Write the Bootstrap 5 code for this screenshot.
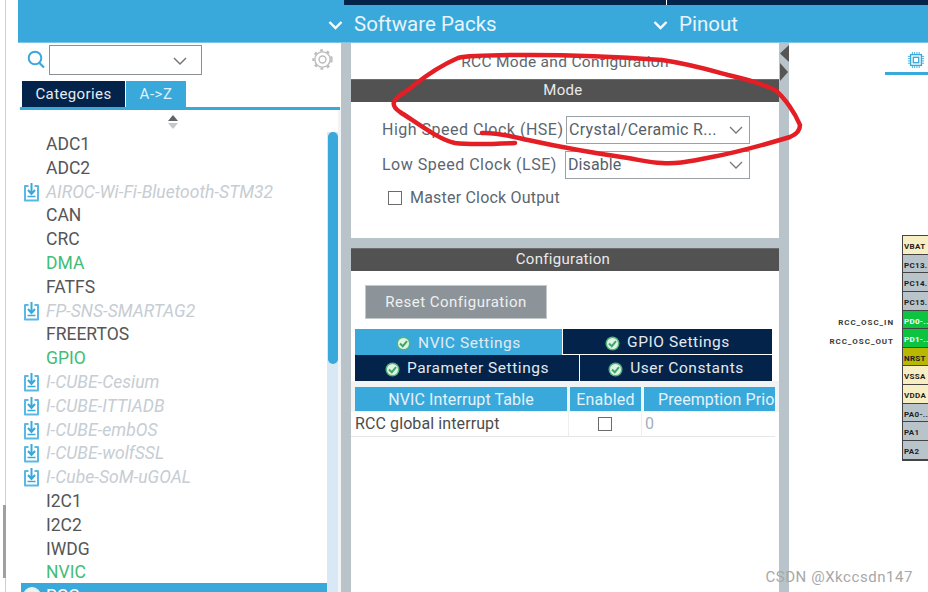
<!DOCTYPE html>
<html lang="en">
<head>
<meta charset="utf-8">
<link href="https://cdn.jsdelivr.net/npm/bootstrap@5.3.0/dist/css/bootstrap.min.css" rel="stylesheet">
<style>
html,body{margin:0;height:100%;overflow:hidden;background:#fff;font-family:Roboto,"Liberation Sans",sans-serif;}
.app-frame{width:928px;height:592px;position:relative;overflow:hidden;padding-left:19px;}
.edge-line{position:absolute;left:5px;top:0;width:1px;height:592px;background:#cfcfcf;}
.edge-line::after{content:"";position:absolute;left:-2px;top:505px;height:73px;width:3px;background:#a0a0a0;}
.top-strip{height:5px;margin-left:-1px;}
.strip-a{width:326px;background:#39a9dc;}
.strip-b{width:322px;margin-right:1px;background:#03234b;}
.strip-c{flex:1;background:#03234b;}
.head-bar{height:38px;margin-left:-1px;padding-left:310px;padding-top:2px;background:#39a9dc;color:#e8f4fb;font-size:20.5px;border-bottom:1px solid #7cc5e8;}
.head-mid{width:325px;}
.chev{width:15px;height:10px;margin-right:11px;}
.workarea{height:549px;}
.left-col{width:322px;background:#f3f4f5;}
.tool-row{height:38px;padding:2px 0 0 8px;background:#fff;}
.find-box{width:153px;height:30px;border:1px solid #8c9196;margin-left:2px;position:relative;}
.find-box svg{position:absolute;right:14px;top:11px;}
.tab-row{height:26px;padding-left:3px;gap:1px;background:#fff;}
.tab-cat{width:103px;padding-top:1px;background:#03234b;color:#e6ecf2;font-size:15px;letter-spacing:.4px;}
.tab-az{width:60px;padding-top:1px;background:#39a9dc;color:#dff1fa;font-size:15px;letter-spacing:.5px;}
.tab-line{height:3px;background:#39a9dc;margin:0 1px;}
.list-wrap{height:482px;position:relative;background:#fff;margin-right:3px;}
.sort-mark{height:18px;padding-left:148px;padding-top:5px;}
.peri-list{padding:0;margin:3px 0 0 2px;list-style:none;font-size:17.5px;width:306px;}
.peri-item{height:23.8px;line-height:27.4px;padding-left:25px;color:#565656;position:relative;white-space:nowrap;}
.peri-green{color:#41bd78;}
.peri-pack{color:#c6cdd3;font-style:italic;}
.peri-pack svg{position:absolute;left:2px;top:3px;}
.peri-sel{background:#39a9dc;color:#fff;}
.peri-sel svg{position:absolute;left:1px;top:3px;}
.scroll-track{position:absolute;right:0;top:22px;bottom:0;width:11px;background:#d9e8f5;}
.scroll-thumb{position:absolute;right:0;top:0;width:10px;height:232px;background:#39a9dc;border-radius:5px;}
.center-gap{width:10px;background:#b9c4ca;}
.center-col{width:428px;background:#b9c4ca;}
.mode-panel{height:195px;background:#fff;font-size:16px;color:#5c6670;}
.panel-title{height:36px;padding-top:8px;text-align:center;font-size:15.5px;letter-spacing:.3px;color:#5e6770;}
.dark-head{height:23px;background:#525252;color:#eaeaea;font-size:15px;letter-spacing:.3px;line-height:21px;text-align:center;border-top:1px solid #6d6d6d;padding-right:4px;}
.pad-form{height:10px;}
.form-line{height:35px;padding-left:31px;letter-spacing:.5px;}
.form-line label{width:184px;white-space:nowrap;}
.combo{width:184px;height:28px;border:1px solid #9aa1a6;padding:0 2px;position:relative;line-height:26px;color:#55606a;letter-spacing:.3px;}
.combo svg{position:absolute;right:6px;top:9px;}
.combo-wide{width:185px;margin-left:-1px;letter-spacing:.1px;}
.check-line{padding-left:37px;height:32px;letter-spacing:.2px;}
.box-check{width:14px;height:14px;border:1px solid #6b6b6b;background:#fff;margin-right:8px;}
.config-panel{margin-top:10px;height:344px;background:#fff;}
.reset-wrap{padding:14px 0 0 14px;height:58px;}
.reset-btn{width:182px;height:34px;background:#8d9499;color:#eef0f1;font-size:15px;letter-spacing:.5px;line-height:32px;text-align:center;border:1px solid #c3c8cb;}
.tab-grid{padding-left:4px;width:421px;}
.tab-line-a,.tab-line-b{height:26px;gap:1px;color:#e3eaf0;font-size:15.5px;letter-spacing:.55px;}
.tab-cell{background:#03234b;}
.tab-line-a .tab-cell{height:25px;padding-top:3px;}
.tab-line-b .tab-cell{padding-top:2px;}
.tab-cell svg{margin-right:7px;}
.tab-line-a .tab-on{background:#39a9dc;height:26px;width:207px;}
.w-224{width:224px;}
.w-fill{flex:1;}
.table-head{gap:3px;background:#f2f3f4;padding:6px 4px 0 4px;height:31px;}
.th-cell{height:24px;background:#39a9dc;color:#e4f2fa;font-size:16px;letter-spacing:.1px;line-height:26px;text-align:center;white-space:nowrap;overflow:hidden;}
.th-a{width:212px;}
.th-b{width:71px;letter-spacing:.2px;}
.th-c{flex:1;text-align:left;padding-left:14px;}
.table-row{height:25px;margin-right:4px;padding-left:4px;font-size:16px;color:#4c4c4c;border-bottom:1px solid #e4e6e8;background:#fff;}
.td-a{width:213px;line-height:24px;letter-spacing:.1px;}
.td-b{width:74px;border-left:1px solid #eee;border-right:1px solid #eee;height:24px;}
.td-c{padding-left:3px;color:#9fb0bf;line-height:24px;}
.col-splitter{width:10px;background:#b9c4ca;position:relative;}
.col-splitter svg{position:absolute;top:2px;left:0;}
.right-pane{flex:1;background:#fff;position:relative;}
.chip-tab{position:absolute;left:96px;top:0;width:62px;height:32px;}
.chip-line{position:absolute;left:0;top:29px;right:0;height:3px;background:#39a9dc;}
.pin-stack{position:absolute;left:113px;top:192px;width:26px;border:1px solid #444;border-right:0;font-size:8px;font-weight:700;}
.pin-cell{height:18.65px;line-height:22px;border-bottom:1px solid #444;background:#b9c4ca;color:#1e1e1e;white-space:nowrap;overflow:hidden;letter-spacing:.3px;padding-left:1px;}
.pin-cream{background:#f8eec4;}
.pin-green{background:#0cc440;color:#fff;}
.pin-olive{background:#b8b800;}
.pin-note{position:absolute;font-size:8px;font-weight:700;color:#3a3a3a;letter-spacing:.95px;right:34px;white-space:nowrap;}
.note-in{top:274px;}
.note-out{top:293px;}
.watermark{position:absolute;right:15px;bottom:4px;font-size:15px;color:#a8a8a8;letter-spacing:.55px;}
.ink-overlay{position:absolute;left:0;top:0;pointer-events:none;}
</style>
</head>
<body>
<div class="app-frame">
  <div class="edge-line"></div>
  <div class="top-strip d-flex">
    <div class="strip-a"></div><div class="strip-b"></div><div class="strip-c"></div>
  </div>
  <div class="head-bar d-flex align-items-center">
    <div class="head-mid d-flex align-items-center"><svg class="chev" viewBox="0 0 15 10"><path d="M1.500 2 7.500 8 13.500 2" fill="none" stroke="#fff" stroke-width="2.400"/></svg>Software Packs</div>
    <div class="d-flex align-items-center"><svg class="chev" viewBox="0 0 15 10"><path d="M1.500 2 7.500 8 13.500 2" fill="none" stroke="#fff" stroke-width="2.400"/></svg>Pinout</div>
  </div>
  <div class="workarea d-flex">
    <div class="left-col">
      <div class="tool-row d-flex align-items-start">
        <svg width="20" height="22" viewBox="0 0 20 22" class="mt-1"><circle cx="8" cy="9" r="6.300" fill="none" stroke="#39a9dc" stroke-width="2"/><path d="M12.500 14 17 18.500" stroke="#39a9dc" stroke-width="2.200"/></svg>
        <div class="find-box"><svg width="14" height="9" viewBox="0 0 14 9"><path d="M1 1 7 7 13 1" fill="none" stroke="#777" stroke-width="1.500"/></svg></div>
        <svg width="21" height="21" viewBox="0 0 22 22" class="ms-auto mt-1" style="margin-right:8px"><circle cx="11" cy="11" r="3.600" fill="none" stroke="#bdbdbd" stroke-width="1.500"/><circle cx="11" cy="11" r="8" fill="none" stroke="#bdbdbd" stroke-width="1.500"/><circle cx="11" cy="11" r="9.500" fill="none" stroke="#bdbdbd" stroke-width="2.400" stroke-dasharray="3 4"/></svg>
      </div>
      <div class="tab-row d-flex">
        <div class="tab-cat d-flex align-items-center justify-content-center">Categories</div>
        <div class="tab-az d-flex align-items-center justify-content-center">A-&gt;Z</div>
      </div>
      <div class="tab-line"></div>
      <div class="list-wrap">
        <div class="sort-mark"><svg width="12" height="14" viewBox="0 0 12 14" class="d-block"><path d="M6 0 11 6H1Z" fill="#5f6468"/><path d="M6 14 11 8H1Z" fill="#c4c8cb"/></svg></div>
        <ul class="peri-list">
          <li class="peri-item">ADC1</li>
          <li class="peri-item">ADC2</li>
          <li class="peri-item peri-pack"><svg width="17" height="20" viewBox="0 0 16 20"><use href="#pk"/></svg>AIROC-Wi-Fi-Bluetooth-STM32</li>
          <li class="peri-item">CAN</li>
          <li class="peri-item">CRC</li>
          <li class="peri-item peri-green">DMA</li>
          <li class="peri-item">FATFS</li>
          <li class="peri-item peri-pack"><svg width="17" height="20" viewBox="0 0 16 20"><use href="#pk"/></svg>FP-SNS-SMARTAG2</li>
          <li class="peri-item">FREERTOS</li>
          <li class="peri-item peri-green">GPIO</li>
          <li class="peri-item peri-pack"><svg width="17" height="20" viewBox="0 0 16 20"><use href="#pk"/></svg>I-CUBE-Cesium</li>
          <li class="peri-item peri-pack"><svg width="17" height="20" viewBox="0 0 16 20"><use href="#pk"/></svg>I-CUBE-ITTIADB</li>
          <li class="peri-item peri-pack"><svg width="17" height="20" viewBox="0 0 16 20"><use href="#pk"/></svg>I-CUBE-embOS</li>
          <li class="peri-item peri-pack"><svg width="17" height="20" viewBox="0 0 16 20"><use href="#pk"/></svg>I-CUBE-wolfSSL</li>
          <li class="peri-item peri-pack"><svg width="17" height="20" viewBox="0 0 16 20"><use href="#pk"/></svg>I-Cube-SoM-uGOAL</li>
          <li class="peri-item">I2C1</li>
          <li class="peri-item">I2C2</li>
          <li class="peri-item">IWDG</li>
          <li class="peri-item peri-green">NVIC</li>
          <li class="peri-item peri-sel"><svg width="20" height="20" viewBox="0 0 20 20"><circle cx="10" cy="10" r="9" fill="#e8f5ec"/><path d="M5 10l4 4 6-7" fill="none" stroke="#35a85d" stroke-width="2.400"/></svg>RCC</li>
        </ul>
        <div class="scroll-track"><div class="scroll-thumb"></div></div>
      </div>
    </div>
    <div class="center-gap"></div>
    <div class="center-col">
      <div class="mode-panel">
        <div class="panel-title">RCC Mode and Configuration</div>
        <div class="dark-head">Mode</div>
        <div class="pad-form"></div>
        <div class="form-line d-flex align-items-center"><label>High Speed Clock (HSE)</label><div class="combo">Crystal/Ceramic R...<svg width="14" height="9" viewBox="0 0 14 9"><path d="M1 1 7 7 13 1" fill="none" stroke="#777" stroke-width="1.300"/></svg></div></div>
        <div class="form-line d-flex align-items-center"><label>Low Speed Clock (LSE)</label><div class="combo combo-wide">Disable<svg width="14" height="9" viewBox="0 0 14 9"><path d="M1 1 7 7 13 1" fill="none" stroke="#777" stroke-width="1.300"/></svg></div></div>
        <div class="check-line d-flex align-items-center"><span class="box-check"></span>Master Clock Output</div>
      </div>
      <div class="config-panel">
        <div class="dark-head">Configuration</div>
        <div class="reset-wrap"><div class="reset-btn">Reset Configuration</div></div>
        <div class="tab-grid">
          <div class="tab-line-a d-flex">
            <div class="tab-cell tab-on d-flex align-items-center justify-content-center"><svg width="15" height="15" viewBox="0 0 15 15"><use href="#ok"/></svg>NVIC Settings</div>
            <div class="tab-cell w-fill d-flex align-items-center justify-content-center"><svg width="15" height="15" viewBox="0 0 15 15"><use href="#ok"/></svg>GPIO Settings</div>
          </div>
          <div class="tab-line-b d-flex">
            <div class="tab-cell w-224 d-flex align-items-center justify-content-center"><svg width="15" height="15" viewBox="0 0 15 15"><use href="#ok"/></svg>Parameter Settings</div>
            <div class="tab-cell w-fill d-flex align-items-center justify-content-center"><svg width="15" height="15" viewBox="0 0 15 15"><use href="#ok"/></svg>User Constants</div>
          </div>
        </div>
        <div class="table-head d-flex">
          <div class="th-cell th-a">NVIC Interrupt Table</div>
          <div class="th-cell th-b">Enabled</div>
          <div class="th-cell th-c">Preemption Prio</div>
        </div>
        <div class="table-row d-flex">
          <div class="td-a">RCC global interrupt</div>
          <div class="td-b d-flex align-items-center justify-content-center"><span class="box-check m-0"></span></div>
          <div class="td-c">0</div>
        </div>
      </div>
    </div>
    <div class="col-splitter"><svg width="10" height="40" viewBox="0 0 10 40"><path d="M10 0V17L1 8.500Z" fill="#555"/><path d="M1 18V36L9 27Z" fill="#555"/></svg></div>
    <div class="right-pane">
      <div class="chip-tab d-flex justify-content-center">
        <svg style="margin-top:8px" width="18" height="18" viewBox="0 0 20 20"><rect x="4" y="4" width="12" height="12" fill="none" stroke="#39a9dc" stroke-width="1.500"/><rect x="7" y="7" width="6" height="6" fill="none" stroke="#39a9dc" stroke-width="1.500"/><path d="M1 6h3M1 8.500h3M1 11h3M1 13.500h3M16 6h3M16 8.500h3M16 11h3M16 13.500h3M6 1v3M8.500 1v3M11 1v3M13.500 1v3M6 16v3M8.500 16v3M11 16v3M13.500 16v3" stroke="#39a9dc" stroke-width="1"/></svg>
        <div class="chip-line"></div>
      </div>
      <div class="pin-note note-in">RCC_OSC_IN</div>
      <div class="pin-note note-out">RCC_OSC_OUT</div>
      <div class="pin-stack">
        <div class="pin-cell pin-cream">VBAT</div>
        <div class="pin-cell">PC13.</div>
        <div class="pin-cell">PC14.</div>
        <div class="pin-cell">PC15.</div>
        <div class="pin-cell pin-green">PD0-..</div>
        <div class="pin-cell pin-green">PD1-..</div>
        <div class="pin-cell pin-olive">NRST</div>
        <div class="pin-cell pin-cream">VSSA</div>
        <div class="pin-cell pin-cream">VDDA</div>
        <div class="pin-cell">PA0-..</div>
        <div class="pin-cell">PA1</div>
        <div class="pin-cell">PA2</div>
      </div>
    </div>
  </div>
  <div class="watermark">CSDN @Xkccsdn147</div>
  <svg class="ink-overlay" width="928" height="592" viewBox="0 0 928 592"><path d="M515 143C495 144 470 145 455 143C440 140 420 125 400 112C390 105 392 100 405 92C415 85 430 70 458 58C470 55 500 55 530 55C580 55 620 57 662 60C690 64 710 70 728 75C750 80 765 85 775 90C785 98 795 113 800 125C800 132 795 135 790 137C770 143 740 152 712 157C690 161 680 164 662 163C650 163 640 160 628 158C600 154 560 147 528 140C510 136 495 132 482 133" fill="none" stroke="#e31e24" stroke-width="4.500" stroke-linecap="round" stroke-linejoin="round"/></svg>
</div>
<svg width="0" height="0" class="position-absolute">
  <defs>
    <g id="pk"><path d="M5 4H1.500V18.500H14.500V4H11" fill="none" stroke="#5bb8e4" stroke-width="2" stroke-linejoin="round"/><path d="M8 1V11M4.500 8 8 12 11.500 8" fill="none" stroke="#39a9dc" stroke-width="2"/><path d="M4 14.500H12" stroke="#39a9dc" stroke-width="1.500"/></g>
    <g id="ok"><circle cx="7.500" cy="7.500" r="7" fill="#55b37a"/><circle cx="7.500" cy="7.500" r="5.500" fill="#dff3e6"/><path d="M4 7.500 6.800 10.200 11 5.200" fill="none" stroke="#3fa766" stroke-width="2"/></g>
  </defs>
</svg>
<script src="https://cdn.jsdelivr.net/npm/bootstrap@5.3.0/dist/js/bootstrap.bundle.min.js"></script>
</body>
</html>
